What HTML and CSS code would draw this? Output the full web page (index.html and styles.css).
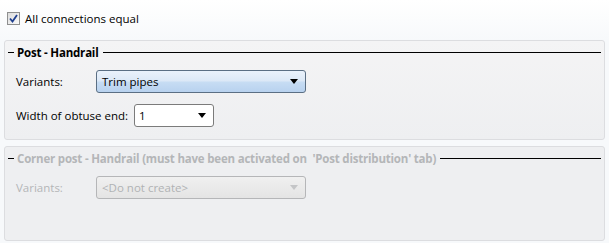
FILE: index.html
```html
<!DOCTYPE html>
<html lang="en">
<head>
    <meta charset="UTF-8">
    <title>Connections</title>
    <link rel="stylesheet" href="styles.css">
</head>
<body>
    <div class="panel">
        <label class="check-row">
            <span class="check-box">
                <svg width="9" height="9" viewBox="0 0 9 9"><path d="M1 4.5 L3.5 7.5 L8 1" fill="none" stroke="#1f3f8f" stroke-width="1.8"/></svg>
            </span>
            All connections equal
        </label>

        <div class="group">
            <div class="group-title"><span class="dash"></span><span class="title-text">Post - Handrail</span><span class="rule"></span></div>
            <div class="field">
                <span class="field-label">Variants:</span>
                <div class="combo combo-active combo-wide">
                    <span class="combo-text">Trim pipes</span>
                    <span class="arrow"></span>
                </div>
            </div>
            <div class="field">
                <span class="field-label field-label-auto">Width of obtuse end:</span>
                <div class="combo combo-white combo-small">
                    <span class="combo-text">1</span>
                    <span class="arrow"></span>
                </div>
            </div>
        </div>

        <div class="group group-disabled">
            <div class="group-title"><span class="dash"></span><span class="title-text">Corner post - Handrail (must have been activated on &nbsp;'Post distribution' tab)</span><span class="rule"></span></div>
            <div class="field">
                <span class="field-label">Variants:</span>
                <div class="combo combo-off combo-wide">
                    <span class="combo-text">&lt;Do not create&gt;</span>
                    <span class="arrow"></span>
                </div>
            </div>
        </div>
    </div>
</body>
</html>
```

FILE: styles.css
```css
body {
    margin: 0;
    background: #f7f9fb;
    font-family: "Open Sans", "Noto Sans", sans-serif;
    font-size: 11.5px;
    color: #000;
}

.panel {
    width: 609px;
    height: 243px;
    padding: 11px 4px 0 4px;
    box-sizing: border-box;
    background: linear-gradient(#ffffff, #f7f9fb 40px);
}

.check-row {
    display: flex;
    align-items: center;
    gap: 5px;
    height: 15px;
    padding-left: 3px;
    margin-bottom: 14px;
}

.check-box {
    width: 11px;
    height: 11px;
    border: 1px solid #8e8f8f;
    background: linear-gradient(135deg, #dcdcdc, #fafafa);
    display: flex;
    align-items: center;
    justify-content: center;
}

.group {
    height: 100px;
    border: 1px solid #dcdde0;
    border-radius: 3px;
    background: linear-gradient(#f4f4f5, #eeeff1);
    box-sizing: border-box;
    padding: 3px 3px 0 3px;
    margin-bottom: 6px;
}

.group-disabled {
    height: 95px;
    background: #eeeff1;
}

.group-title {
    display: flex;
    align-items: center;
    height: 17px;
    font-weight: bold;
    margin-bottom: 9px;
}

.dash {
    width: 6px;
    height: 1px;
    background: #000;
    margin-right: 3px;
}

.title-text {
    white-space: nowrap;
    margin-right: 4px;
    letter-spacing: -0.2px;
}

.rule {
    flex: 1;
    height: 1px;
    background: #000;
}

.group-disabled .title-text,
.group-disabled .field-label {
    color: #b4b6b8;
}

.field {
    display: flex;
    align-items: center;
    padding-left: 8px;
    margin-bottom: 11px;
}

.field-label {
    width: 80px;
    white-space: nowrap;
}

.field-label-auto {
    width: auto;
    margin-right: 6px;
}

.combo {
    height: 23px;
    box-sizing: border-box;
    border: 1px solid #707070;
    border-radius: 3px;
    display: flex;
    align-items: center;
    padding: 0 7px 0 5px;
}

.combo-wide {
    width: 210px;
}

.combo-small {
    width: 80px;
    padding-left: 4px;
}

.combo-active {
    background: linear-gradient(#eaf2fb 0%, #dde9f7 45%, #c6dcf3 55%, #b8d2ef 100%);
    border-color: #5b6f84;
}

.combo-white {
    background: #fff;
    border-color: #7b7b7b;
}

.combo-off {
    background: linear-gradient(#f0f0f0, #e4e4e4);
    border-color: #b5b6b8;
    color: #b0b2b4;
}

.combo-text {
    flex: 1;
}

.arrow {
    width: 0;
    height: 0;
    border-left: 4px solid transparent;
    border-right: 4px solid transparent;
    border-top: 5px solid #000;
}

.combo-off .arrow {
    border-top-color: #c4c5c7;
}
```
